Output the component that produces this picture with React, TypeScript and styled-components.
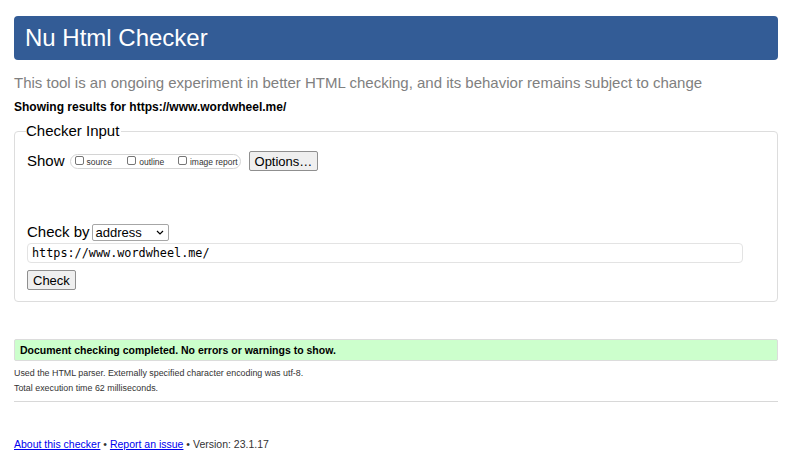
import React from "react";
import styled, { createGlobalStyle } from "styled-components";

const Global = createGlobalStyle`
  html, body { margin: 0; padding: 0; background: #fff; }
  body { font-family: "Liberation Sans", Arial, sans-serif; color: #000; }
`;

const Page = styled.div`
  padding: 16px 14px 0 14px;
  display: flex;
  flex-direction: column;
`;

const Header = styled.h1`
  margin: 0;
  height: 44px;
  background: #335c96;
  border-radius: 4px;
  color: #fff;
  font-weight: normal;
  font-size: 24px;
  display: flex;
  align-items: center;
  padding-left: 11px;
`;

const Tagline = styled.p`
  margin: 14px 0 0 0;
  font-size: 15px;
  line-height: 18px;
  color: #808080;
`;

const Showing = styled.p`
  margin: 8px 0 0 0;
  font-size: 12px;
  line-height: 14px;
  font-weight: bold;
`;

const Fieldset = styled.fieldset`
  margin: 8px 0 0 0;
  border: 1px solid #dddddd;
  border-radius: 4px;
  padding: 0 12px 11px 12px;
  display: flex;
  flex-direction: column;
  min-width: 0;
`;

const Legend = styled.legend`
  font-size: 15px;
  padding: 0 2px 0 0;
  margin-left: -1px;
  line-height: 18px;
`;

const Row = styled.div<{ $mt?: number }>`
  display: flex;
  align-items: center;
  margin-top: ${(p) => p.$mt ?? 0}px;
`;

const Label = styled.span`
  font-size: 15px;
  line-height: 18px;
`;

const Pill = styled.span`
  display: inline-flex;
  align-items: center;
  box-sizing: border-box;
  border: 1px solid #d4d4d4;
  border-radius: 8px;
  height: 15px;
  width: 171px;
  padding: 0 0 0 4px;
  margin-left: 5px;
`;

const Opt = styled.label<{ $w: number }>`
  display: inline-flex;
  align-items: center;
  white-space: nowrap;
  width: ${(p) => p.$w}px;
  font-size: 8.5px;
  color: #333;
  padding-top: 2px;
`;

const Box = styled.span`
  display: inline-block;
  box-sizing: border-box;
  width: 9px;
  height: 9px;
  border: 1px solid #767676;
  border-radius: 2px;
  margin-right: 3px;
  margin-top: -4px;
  flex: none;
`;

const Button = styled.button<{ $ml?: number }>`
  font-family: "Liberation Sans", Arial, sans-serif;
  font-size: 13px;
  height: 20px;
  margin-left: ${(p) => p.$ml ?? 0}px;
  padding: 0 5px;
  border: 1px solid #8f8f8f;
  border-radius: 2px;
  background: #efefef;
  color: #000;
  display: inline-flex;
  align-items: center;
`;

const Select = styled.span`
  display: inline-flex;
  align-items: center;
  justify-content: space-between;
  box-sizing: border-box;
  width: 77px;
  height: 17px;
  margin-left: 2px;
  border: 1px solid #a6a6a6;
  border-radius: 2px;
  padding: 0 4px 0 3px;
  font-size: 13px;
  color: #000;
`;

const UrlInput = styled.div`
  box-sizing: border-box;
  width: 716px;
  height: 20px;
  margin-top: 2px;
  border: 1px solid #e3e3e3;
  border-radius: 4px;
  padding-left: 4px;
  display: flex;
  align-items: center;
  font-family: "DejaVu Sans Mono", "Liberation Mono", monospace;
  font-size: 11.8px;
  color: #000;
`;

const Success = styled.div`
  margin-top: 37px;
  height: 22px;
  box-sizing: border-box;
  background: #ccffcc;
  border: 1px solid #dcdcdc;
  border-radius: 2px;
  padding-left: 5px;
  display: flex;
  align-items: center;
  font-size: 10.5px;
  font-weight: bold;
`;

const Small = styled.p<{ $mt: number }>`
  margin: ${(p) => p.$mt}px 0 0 0;
  font-size: 8.9px;
  line-height: 11px;
  color: #333;
`;

const Rule = styled.hr`
  margin: 7px 0 0 0;
  border: 0;
  border-top: 1px solid #d8d8d8;
`;

const Footer = styled.p`
  margin: 36px 0 0 0;
  font-size: 10.5px;
  color: #333;
  a { color: #0000ee; text-decoration: underline; }
`;

const Chevron = () => (
  <svg width="8" height="5" viewBox="0 0 8 5">
    <path d="M1 1 L4 4 L7 1" fill="none" stroke="#000" strokeWidth="1.2" />
  </svg>
);

export default function App() {
  return (
    <>
      <Global />
      <Page>
        <Header>Nu Html Checker</Header>
        <Tagline>
          This tool is an ongoing experiment in better HTML checking, and its behavior remains subject to change
        </Tagline>
        <Showing>Showing results for https://www.wordwheel.me/</Showing>
        <Fieldset>
          <Legend>Checker Input</Legend>
          <Row $mt={11}>
            <Label>Show</Label>
            <Pill>
              <Opt $w={53}><Box />source</Opt>
              <Opt $w={51}><Box />outline</Opt>
              <Opt $w={62}><Box />image report</Opt>
            </Pill>
            <Button $ml={8}>Options…</Button>
          </Row>
          <Row $mt={52}>
            <Label>Check by</Label>
            <Select>address<Chevron /></Select>
          </Row>
          <UrlInput>https://www.wordwheel.me/</UrlInput>
          <Row $mt={7}>
            <Button>Check</Button>
          </Row>
        </Fieldset>
        <Success>Document checking completed. No errors or warnings to show.</Success>
        <Small $mt={7}>Used the HTML parser. Externally specified character encoding was utf-8.</Small>
        <Small $mt={4}>Total execution time 62 milliseconds.</Small>
        <Rule />
        <Footer>
          <a href="#">About this checker</a> • <a href="#">Report an issue</a> • Version: 23.1.17
        </Footer>
      </Page>
    </>
  );
}
